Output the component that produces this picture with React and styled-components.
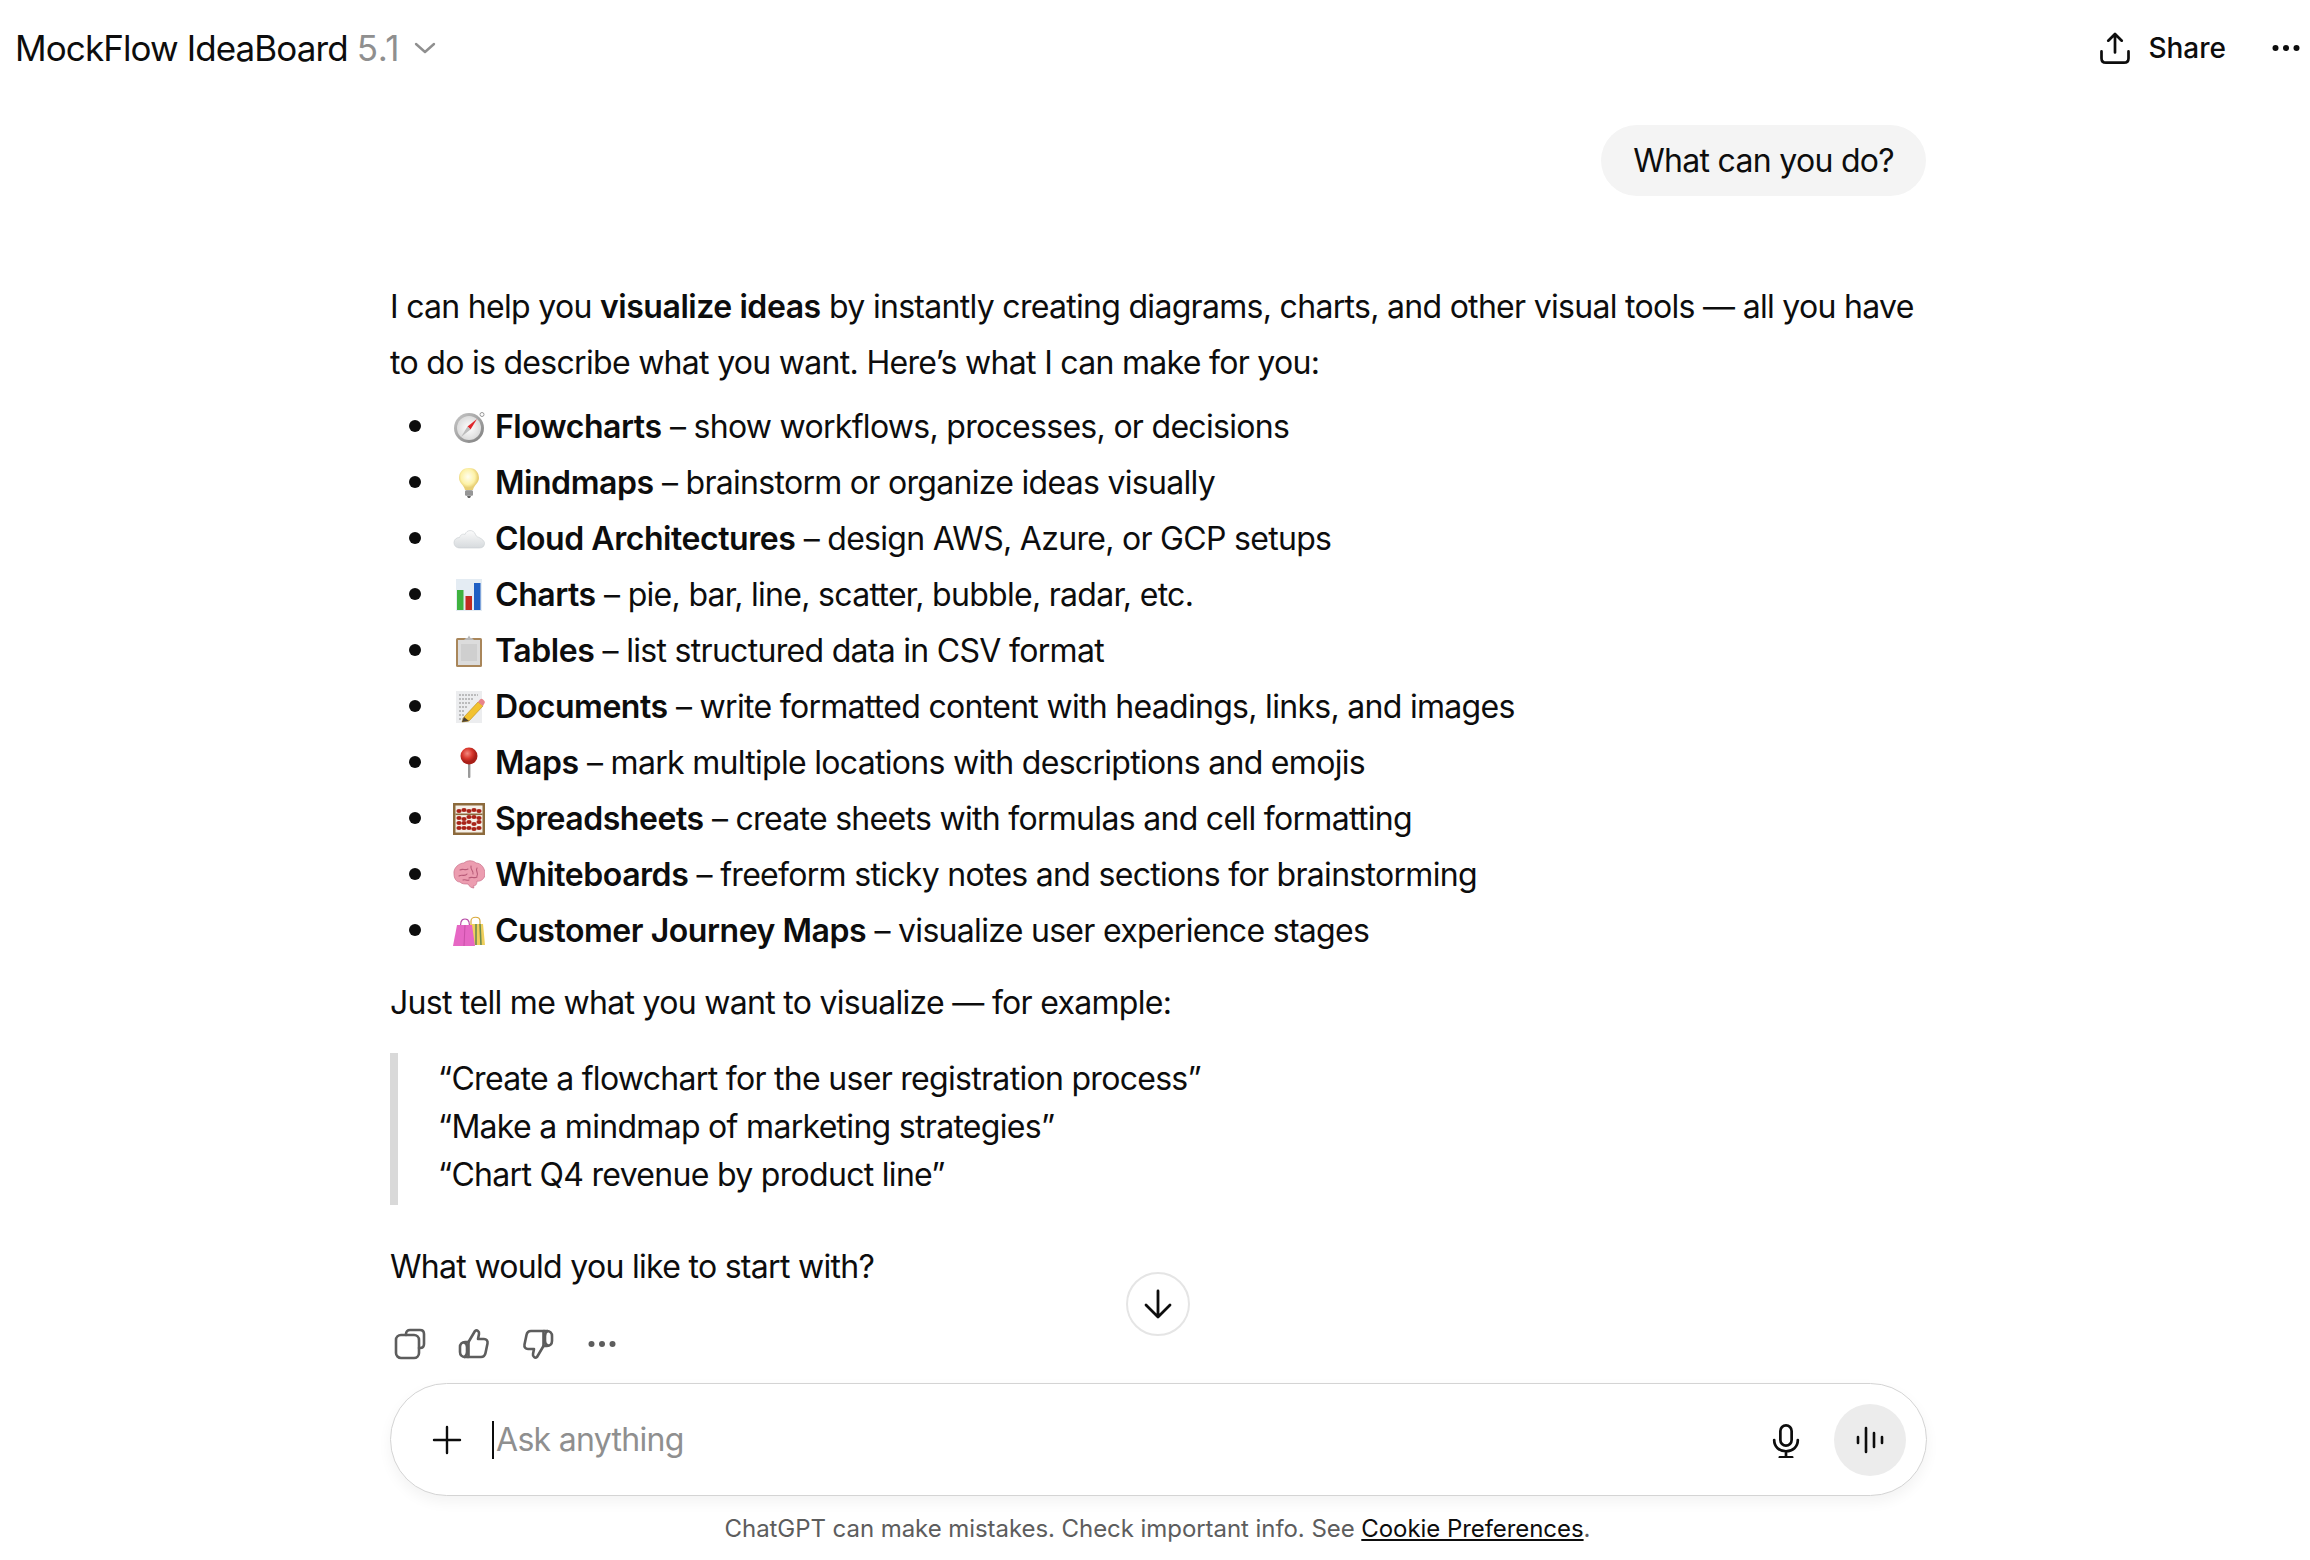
import React from 'react'
import styled, { createGlobalStyle } from 'styled-components'

const GlobalStyle = createGlobalStyle`
  html, body { margin: 0; padding: 0; background: #fff; }
  body { font-family: Inter, "Noto Sans", sans-serif; color: #0d0d0d; overflow: hidden; }
`

const Page = styled.div`
  position: relative;
  width: 2310px;
  height: 1560px;
  display: flex;
  flex-direction: column;
`

const Header = styled.header`
  height: 96px;
  display: flex;
  align-items: center;
  justify-content: space-between;
  padding: 0 10px 0 15px;
`

const Title = styled.div`
  display: flex;
  align-items: center;
  font-size: 35px;
  letter-spacing: -0.9px;
  span { color: #8f8f8f; margin-left: 9px; letter-spacing: 0.6px; }
  svg { margin-left: 14px; }
`

const HeaderActions = styled.div`
  display: flex;
  align-items: center;
`

const ShareButton = styled.div`
  display: flex;
  align-items: center;
  gap: 15px;
  font-size: 28px;
  font-weight: 500;
  margin-right: 46px;
`

const Thread = styled.main`
  width: 1536px;
  margin: 0 0 0 390px;
  flex: 1;
  letter-spacing: -0.7px;
`

const Bubble = styled.div`
  width: fit-content;
  margin: 29px 0 83px auto;
  height: 71px;
  padding: 0 32px;
  display: flex;
  align-items: center;
  background: #f4f4f4;
  border-radius: 36px;
  font-size: 32px;
`

const Para = styled.p`
  margin: ${p => p.$top || 0}px 0 0;
  font-size: 32px;
  line-height: 56px;
  strong { font-weight: 600; letter-spacing: -0.45px; }
`

const List = styled.ul`
  margin: 8px 0 0;
  padding: 0 0 0 50px;
  font-size: 32px;
`

const Item = styled.li`
  height: 56px;
  line-height: 50px;
  strong { font-weight: 600; letter-spacing: -0.45px; }
  svg { vertical-align: -5px; margin: 0 10px 0 13px; }
  &::marker { font-size: 38px; }
`

const Quote = styled.blockquote`
  margin: 22px 0 0;
  padding: 2px 0 6px 40px;
  border-left: 8px solid #d9d9d9;
  font-size: 32px;
  line-height: 48px;
`

const Actions = styled.div`
  margin: 33px 0 0 4px;
  height: 32px;
  display: flex;
  align-items: center;
  gap: 32px;
`

const ScrollDown = styled.div`
  position: absolute;
  left: 1126px;
  top: 1272px;
  width: 64px;
  height: 64px;
  box-sizing: border-box;
  border: 2px solid #e5e5e5;
  border-radius: 50%;
  background: #fff;
  display: flex;
  align-items: center;
  justify-content: center;
`

const Composer = styled.div`
  width: 1537px;
  height: 113px;
  margin: 0 0 0 390px;
  box-sizing: border-box;
  border: 1.5px solid #d4d4d4;
  border-radius: 57px;
  box-shadow: 0 6px 14px rgba(0, 0, 0, 0.05);
  display: flex;
  align-items: center;
  padding: 0 20px 0 40px;
  background: #fff;
`

const Placeholder = styled.div`
  flex: 1;
  margin-left: 29px;
  display: flex;
  align-items: center;
  font-size: 32px;
  letter-spacing: -0.7px;
  color: #8f8f8f;
`

const Caret = styled.i`
  width: 2px;
  height: 38px;
  background: #0d0d0d;
  margin-right: 2px;
`

const VoiceButton = styled.div`
  width: 72px;
  height: 72px;
  margin-left: 30px;
  border-radius: 50%;
  background: #ececec;
  display: flex;
  align-items: center;
  justify-content: center;
`

const Footnote = styled.div`
  height: 64px;
  display: flex;
  align-items: center;
  justify-content: center;
  font-size: 24px;
  color: #5d5d5d;
  letter-spacing: -0.06px;
  white-space: pre;
  padding-left: 5px;
  a { color: #0d0d0d; text-decoration: underline; }
`

const Ic = ({ size = 32, children, fill = 'none', stroke = 'currentColor', sw = 2.6, color }) => (
  <svg width={size} height={size} viewBox="0 0 32 32" fill={fill} stroke={stroke} strokeWidth={sw} strokeLinecap="round" strokeLinejoin="round" style={color ? { color } : undefined}>
    {children}
  </svg>
)

const Emoji = ({ children }) => (
  <svg width="32" height="32" viewBox="0 0 32 32">{children}</svg>
)

const CompassEmoji = () => (
  <Emoji>
    <defs>
      <linearGradient id="cg" x1="0" y1="0" x2="1" y2="1"><stop offset="0" stopColor="#c9c9c9" /><stop offset="1" stopColor="#7d7d7d" /></linearGradient>
      <radialGradient id="cf"><stop offset="0" stopColor="#fff" /><stop offset="1" stopColor="#dcdcdc" /></radialGradient>
    </defs>
    <circle cx="29" cy="3.5" r="2" fill="#fff" stroke="#999" strokeWidth="1" />
    <circle cx="16" cy="17" r="15" fill="url(#cg)" />
    <circle cx="16" cy="17" r="12" fill="url(#cf)" />
    <path d="M24 8 L14.5 15.5 L17.5 18.5 Z" fill="#e0262b" />
    <path d="M8 26 L17.5 18.5 L14.5 15.5 Z" fill="#bdbdbd" />
  </Emoji>
)

const BulbEmoji = () => (
  <Emoji>
    <defs>
      <radialGradient id="bl" cx="0.45" cy="0.4"><stop offset="0" stopColor="#fffef0" /><stop offset="0.7" stopColor="#fdf2a8" /><stop offset="1" stopColor="#e8cf75" /></radialGradient>
    </defs>
    <path d="M16 1 C9 1 6 6 6 11 C6 16 11 18 12 23 L20 23 C21 18 26 16 26 11 C26 6 23 1 16 1 Z" fill="url(#bl)" />
    <rect x="12" y="23" width="8" height="6" rx="1.5" fill="#a8a8a8" />
    <path d="M12 25 H20 M12 27 H20" stroke="#7c7c7c" strokeWidth="0.8" />
    <path d="M14 29 H18 L17 31 H15 Z" fill="#666" />
  </Emoji>
)

const CloudEmoji = () => (
  <Emoji>
    <defs>
      <linearGradient id="cl" x1="0" y1="0" x2="0" y2="1"><stop offset="0" stopColor="#fbfbfb" /><stop offset="1" stopColor="#d6dadd" /></linearGradient>
    </defs>
    <path transform="translate(0 3)" d="M7 22 C3 22 1 19.5 1 16.5 C1 13.5 3.5 11.5 6.5 11.5 C7.5 8.5 10 7.5 12 8.5 C13.5 3.5 20.5 3 22.5 8.5 C23.5 11.5 25 10.5 27 12 C30 13.5 32 16 31.5 18 C31 21 29 22 26 22 Z" fill="url(#cl)" stroke="#c8ccd0" strokeWidth="0.6" />
  </Emoji>
)

const ChartEmoji = () => (
  <Emoji>
    <rect x="3" y="0" width="26" height="32" fill="#e4ecf3" />
    <rect x="4" y="11" width="6.5" height="20" fill="#3fb23f" />
    <rect x="12.5" y="17" width="6.5" height="14" fill="#c22a20" />
    <rect x="21" y="4" width="6.5" height="27" fill="#1f5fc4" />
  </Emoji>
)

const ClipboardEmoji = () => (
  <Emoji>
    <rect x="3" y="3" width="26" height="29" rx="1.5" fill="#a9865a" />
    <rect x="5" y="5" width="22" height="25" fill="#dcdcdc" />
    <rect x="8" y="9" width="16" height="17" fill="#cfcfcf" />
    <path d="M11 5 L13 3 H14.5 L16 0.5 L17.5 3 H19 L21 5 Z" fill="#b9b9b9" />
  </Emoji>
)

const DocEmoji = () => (
  <Emoji>
    <rect x="3" y="0" width="26" height="32" fill="#ecedef" />
    <path d="M6 4 H25 M6 8 H21 M6 12 H18 M6 16 H14 M6 20 H12 M6 24 H12 M6 28 H10" stroke="#8a8a8a" strokeWidth="1" strokeDasharray="2 1" />
    <path d="M11 26 L25 11 L30 15 L16 30 L9 31 Z" fill="#f2c230" stroke="#b98a1a" strokeWidth="0.6" />
    <path d="M25 11 L27 8.5 C28 7.5 29 7.5 30 8.5 L31.5 10 C32 11 32 12 31 13 L30 15 Z" fill="#e8838a" />
    <path d="M11 26 L16 30 L9 31 Z" fill="#4a4033" />
  </Emoji>
)

const PinEmoji = () => (
  <Emoji>
    <defs>
      <radialGradient id="pn" cx="0.4" cy="0.35"><stop offset="0" stopColor="#f28a80" /><stop offset="0.6" stopColor="#d9382d" /><stop offset="1" stopColor="#a81f18" /></radialGradient>
    </defs>
    <rect x="15" y="14" width="2.4" height="17" rx="1" fill="#9a9a9a" />
    <circle cx="16" cy="9" r="8.5" fill="url(#pn)" />
  </Emoji>
)

const AbacusEmoji = () => {
  const beads = [
    [6, 8], [11, 7], [16, 8], [21, 7], [26, 8],
    [6, 15], [11, 16], [16, 14], [21, 14], [26, 15],
    [6, 20], [11, 20], [16, 19], [21, 21], [26, 19],
    [6, 25], [11, 25], [16, 25], [21, 26], [26, 25],
  ]
  return (
    <Emoji>
      <rect x="0" y="0" width="32" height="32" fill="#8c6a3c" />
      <rect x="2.5" y="2.5" width="27" height="27" fill="#f5f0e8" />
      <rect x="2.5" y="10.5" width="27" height="1.6" fill="#8c6a3c" />
      {beads.map(([x, y], i) => (
        <ellipse key={i} cx={x} cy={y} rx="2.6" ry="1.9" fill="#a92418" />
      ))}
    </Emoji>
  )
}

const BrainEmoji = () => (
  <Emoji>
    <path d="M1 15 C0 9 6 4 11 4 C14 1 20 1 23 4 C28 4 32 9 32 15 C32 20 27 23 24 22 C24 26 22 27 20 27 L21 29 C18 29 16 27 15 25 C11 25 9 25 7 23 C3 23 1 19 1 15 Z" fill="#ec9db0" stroke="#c86f88" strokeWidth="0.7" />
    <path d="M7 11 C10 9 12 12 15 10 M18 7 C17 11 21 12 20 15 M6 17 C9 15 12 18 14 15 M24 9 C22 12 26 14 24 17 M16 19 C19 17 21 20 24 18 M10 21 C12 20 14 22 16 21" fill="none" stroke="#b85a78" strokeWidth="1.1" strokeLinecap="round" />
  </Emoji>
)

const BagsEmoji = () => (
  <Emoji>
    <path d="M18 14 L18 6 C18 1 27 1 27 6 L27 12" fill="none" stroke="#d9a93a" strokeWidth="1.2" />
    <path d="M16 9 H30 L32 30 H18 Z" fill="#efcf5c" />
    <path d="M23 9 V30 M27 9 L28 30" stroke="#6d8a50" strokeWidth="1.6" />
    <path d="M7 14 L8 7 C9 3 15 3 16 7 L17 14" fill="none" stroke="#b84fa8" strokeWidth="1.2" />
    <path d="M4 10 H19 L22 31 H0 Z" fill="#e667c4" />
    <path d="M12 10 L11 31" stroke="#c94fa8" strokeWidth="1" />
  </Emoji>
)

const items = [
  [CompassEmoji, 'Flowcharts', 'show workflows, processes, or decisions'],
  [BulbEmoji, 'Mindmaps', 'brainstorm or organize ideas visually'],
  [CloudEmoji, 'Cloud Architectures', 'design AWS, Azure, or GCP setups'],
  [ChartEmoji, 'Charts', 'pie, bar, line, scatter, bubble, radar, etc.'],
  [ClipboardEmoji, 'Tables', 'list structured data in CSV format'],
  [DocEmoji, 'Documents', 'write formatted content with headings, links, and images'],
  [PinEmoji, 'Maps', 'mark multiple locations with descriptions and emojis'],
  [AbacusEmoji, 'Spreadsheets', 'create sheets with formulas and cell formatting'],
  [BrainEmoji, 'Whiteboards', 'freeform sticky notes and sections for brainstorming'],
  [BagsEmoji, 'Customer Journey Maps', 'visualize user experience stages'],
]

const App = () => (
  <Page>
    <GlobalStyle />
    <Header>
      <Title>
        MockFlow IdeaBoard <span>5.1</span>
        <svg width="22" height="14" viewBox="0 0 22 14" fill="none" stroke="#8f8f8f" strokeWidth="2.4" strokeLinecap="round" strokeLinejoin="round"><path d="M2 3 L11 11 L20 3" /></svg>
      </Title>
      <HeaderActions>
        <ShareButton>
          <Ic size={36} sw={2.4}>
            <path d="M16 20 V4 M10 9.5 L16 3.5 L22 9.5" />
            <path d="M4 19 V25 C4 27.5 5.5 29 8 29 H24 C26.5 29 28 27.5 28 25 V19" />
          </Ic>
          Share
        </ShareButton>
        <svg width="28" height="8" viewBox="0 0 28 8" fill="#0d0d0d"><circle cx="3.5" cy="4" r="3" /><circle cx="14" cy="4" r="3" /><circle cx="24.5" cy="4" r="3" /></svg>
      </HeaderActions>
    </Header>

    <Thread>
      <Bubble>What can you do?</Bubble>
      <Para>
        I can help you <strong>visualize ideas</strong> by instantly creating diagrams, charts, and other visual tools — all you have to do is describe what you want. Here’s what I can make for you:
      </Para>
      <List>
        {items.map(([Icon, name, text]) => (
          <Item key={name}>
            <Icon />
            <strong>{name}</strong> – {text}
          </Item>
        ))}
      </List>
      <Para $top={16}>Just tell me what you want to visualize — for example:</Para>
      <Quote>
        “Create a flowchart for the user registration process”<br />
        “Make a mindmap of marketing strategies”<br />
        “Chart Q4 revenue by product line”
      </Quote>
      <Para $top={34}>What would you like to start with?</Para>
      <Actions>
        <Ic color="#5d5d5d">
          <path d="M12 7 V6 C12 3.5 13.5 2 16 2 H26 C28.5 2 30 3.5 30 6 V16 C30 18.5 28.5 20 26 20 H25" />
          <rect x="2" y="7" width="23" height="23" rx="5" />
        </Ic>
        <Ic color="#5d5d5d">
          <path d="M10 29 H23 C25.5 29 27 27.5 27.5 25 L29.5 15.5 C30 13 28.5 11 26 11 H20 L21 6 C21.5 3.5 19 1.5 17 3 L10.5 14 V29" />
          <path d="M10.5 14 H7 C4 14 2 16 2 19 V24 C2 27 4 29 7 29 H10" />
          <path d="M6 14.5 C8 15 9 17 9 19 V24 C9 26 8 28 6.5 29" />
        </Ic>
        <Ic color="#5d5d5d">
          <path d="M22 3 H9 C6.5 3 5 4.5 4.5 7 L2.5 16.5 C2 19 3.5 21 6 21 H12 L11 26 C10.5 28.5 13 30.5 15 29 L21.5 18 V3" />
          <path d="M21.5 18 H25 C28 18 30 16 30 13 V8 C30 5 28 3 25 3 H22" />
          <path d="M26 17.5 C24 17 23 15 23 13 V8 C23 6 24 4 25.5 3" />
        </Ic>
        <svg width="28" height="8" viewBox="0 0 28 8" fill="#5d5d5d" style={{ marginLeft: '2px' }}><circle cx="3.5" cy="4" r="3" /><circle cx="14" cy="4" r="3" /><circle cx="24.5" cy="4" r="3" /></svg>
      </Actions>
    </Thread>

    <ScrollDown>
      <Ic size={32} sw={2.8} color="#0d0d0d"><path d="M16 3 V29 M4 17 L16 29 L28 17" /></Ic>
    </ScrollDown>

    <Composer>
      <Ic size={32} sw={2.4} color="#0d0d0d"><path d="M16 3 V29 M3 16 H29" /></Ic>
      <Placeholder><Caret />Ask anything</Placeholder>
      <Ic size={36} sw={2.4} color="#0d0d0d">
        <rect x="11" y="3" width="10" height="18" rx="5" />
        <path d="M5.5 16 C5.5 22 10 26 16 26 C22 26 26.5 22 26.5 16 M16 26 V31 M10.5 31.5 H21.5" />
      </Ic>
      <VoiceButton>
        <Ic size={32} sw={2.6} color="#0d0d0d"><path d="M4 13 V19 M12 4 V28 M20 9 V23 M28 13 V19" /></Ic>
      </VoiceButton>
    </Composer>
    <Footnote>ChatGPT can make mistakes. Check important info. See <a>Cookie Preferences</a>.</Footnote>
  </Page>
)

export default App
